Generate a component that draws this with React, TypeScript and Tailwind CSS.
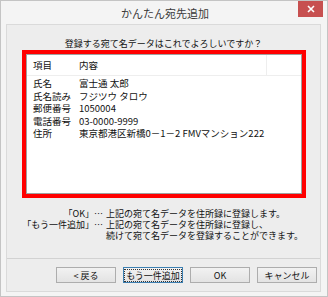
import React from "react";

const font = { fontFamily: '"Noto Sans CJK JP", "Noto Sans", sans-serif' };

const rows: [string, string][] = [
  ["氏名", "富士通 太郎"],
  ["氏名読み", "フジツウ タロウ"],
  ["郵便番号", "1050004"],
  ["電話番号", "03-0000-9999"],
  ["住所", "東京都港区新橋0－1－2 FMVマンション222"],
];

function Btn({ children, focus }: { children: React.ReactNode; focus?: boolean }) {
  return (
    <div
      className={
        "w-[60px] h-[16px] flex items-center justify-center text-[9px] leading-none text-[#111] bg-gradient-to-b from-[#f2f2f2] to-[#e3e3e3] border " +
        (focus ? "border-[#3c7fb1]" : "border-[#adadad]")
      }
    >
      {focus ? (
        <span className="border border-dotted border-[#333] px-[1px] leading-[11px]">{children}</span>
      ) : (
        children
      )}
    </div>
  );
}

export default function App() {
  return (
    <div
      className="w-[328px] h-[297px] bg-[#f4f4f4] border border-[#c4c4c4] flex flex-col overflow-hidden"
      style={font}
    >
      <div className="relative h-[23px] flex items-center justify-center">
        <span className="text-[11px] text-[#3a3a3a] pl-[2px] pt-[2px]">かんたん宛先追加</span>
        <div className="absolute top-[-1px] right-[4px] w-[25px] h-[17px] bg-[#c75050] flex items-center justify-center">
          <svg width="8" height="8" viewBox="0 0 8 8">
            <path d="M1 1L7 7M7 1L1 7" stroke="#fff" strokeWidth="1.6" />
          </svg>
        </div>
      </div>
      <div className="ml-[5px] w-[315px] h-[268px] bg-[#ededed] border border-[#dadada] flex flex-col">
        <div className="pt-[13px] h-[25px] text-[9px] leading-[12px] text-center text-[#111]">
          登録する宛て名データはこれでよろしいですか？
        </div>
        <div className="ml-[15px] w-[284px] h-[148px] border-[4px] border-[#ff0000]">
          <div className="w-full h-full bg-white border border-[#a0a0a0] flex flex-col">
            <div className="h-[21px] flex items-center border-b border-[#eeeeee] text-[9.5px] text-[#111]">
              <span className="pl-[6px] w-[52px]">項目</span>
              <span className="w-[187px]">内容</span>
              <span className="h-full border-l border-[#eeeeee]" />
            </div>
            <div className="pt-[1px] flex flex-col">
              {rows.map(([a, b]) => (
                <div key={a} className="h-[12.5px] flex items-center text-[9.5px] text-[#111] whitespace-nowrap">
                  <span className="pl-[6px] w-[52px]">{a}</span>
                  <span>{b}</span>
                </div>
              ))}
            </div>
          </div>
        </div>
        <div className="mt-[10px] grid grid-cols-[96px_1fr] gap-x-[3px] text-[9px] leading-[11px] text-[#111] whitespace-nowrap">
          <span className="text-right">「OK」…</span>
          <span>上記の宛て名データを住所録に登録します。</span>
          <span className="text-right">「もう一件追加」…</span>
          <span>上記の宛て名データを住所録に登録し、</span>
          <span />
          <span>続けて宛て名データを登録することができます。</span>
        </div>
        <div className="mt-[17px] h-px bg-[#d2d2d2]" />
        <div className="mt-[8px] flex gap-[7px] pl-[49px]">
          <Btn>&lt; 戻る</Btn>
          <Btn focus>もう一件追加</Btn>
          <Btn>OK</Btn>
          <Btn>キャンセル</Btn>
        </div>
      </div>
    </div>
  );
}
